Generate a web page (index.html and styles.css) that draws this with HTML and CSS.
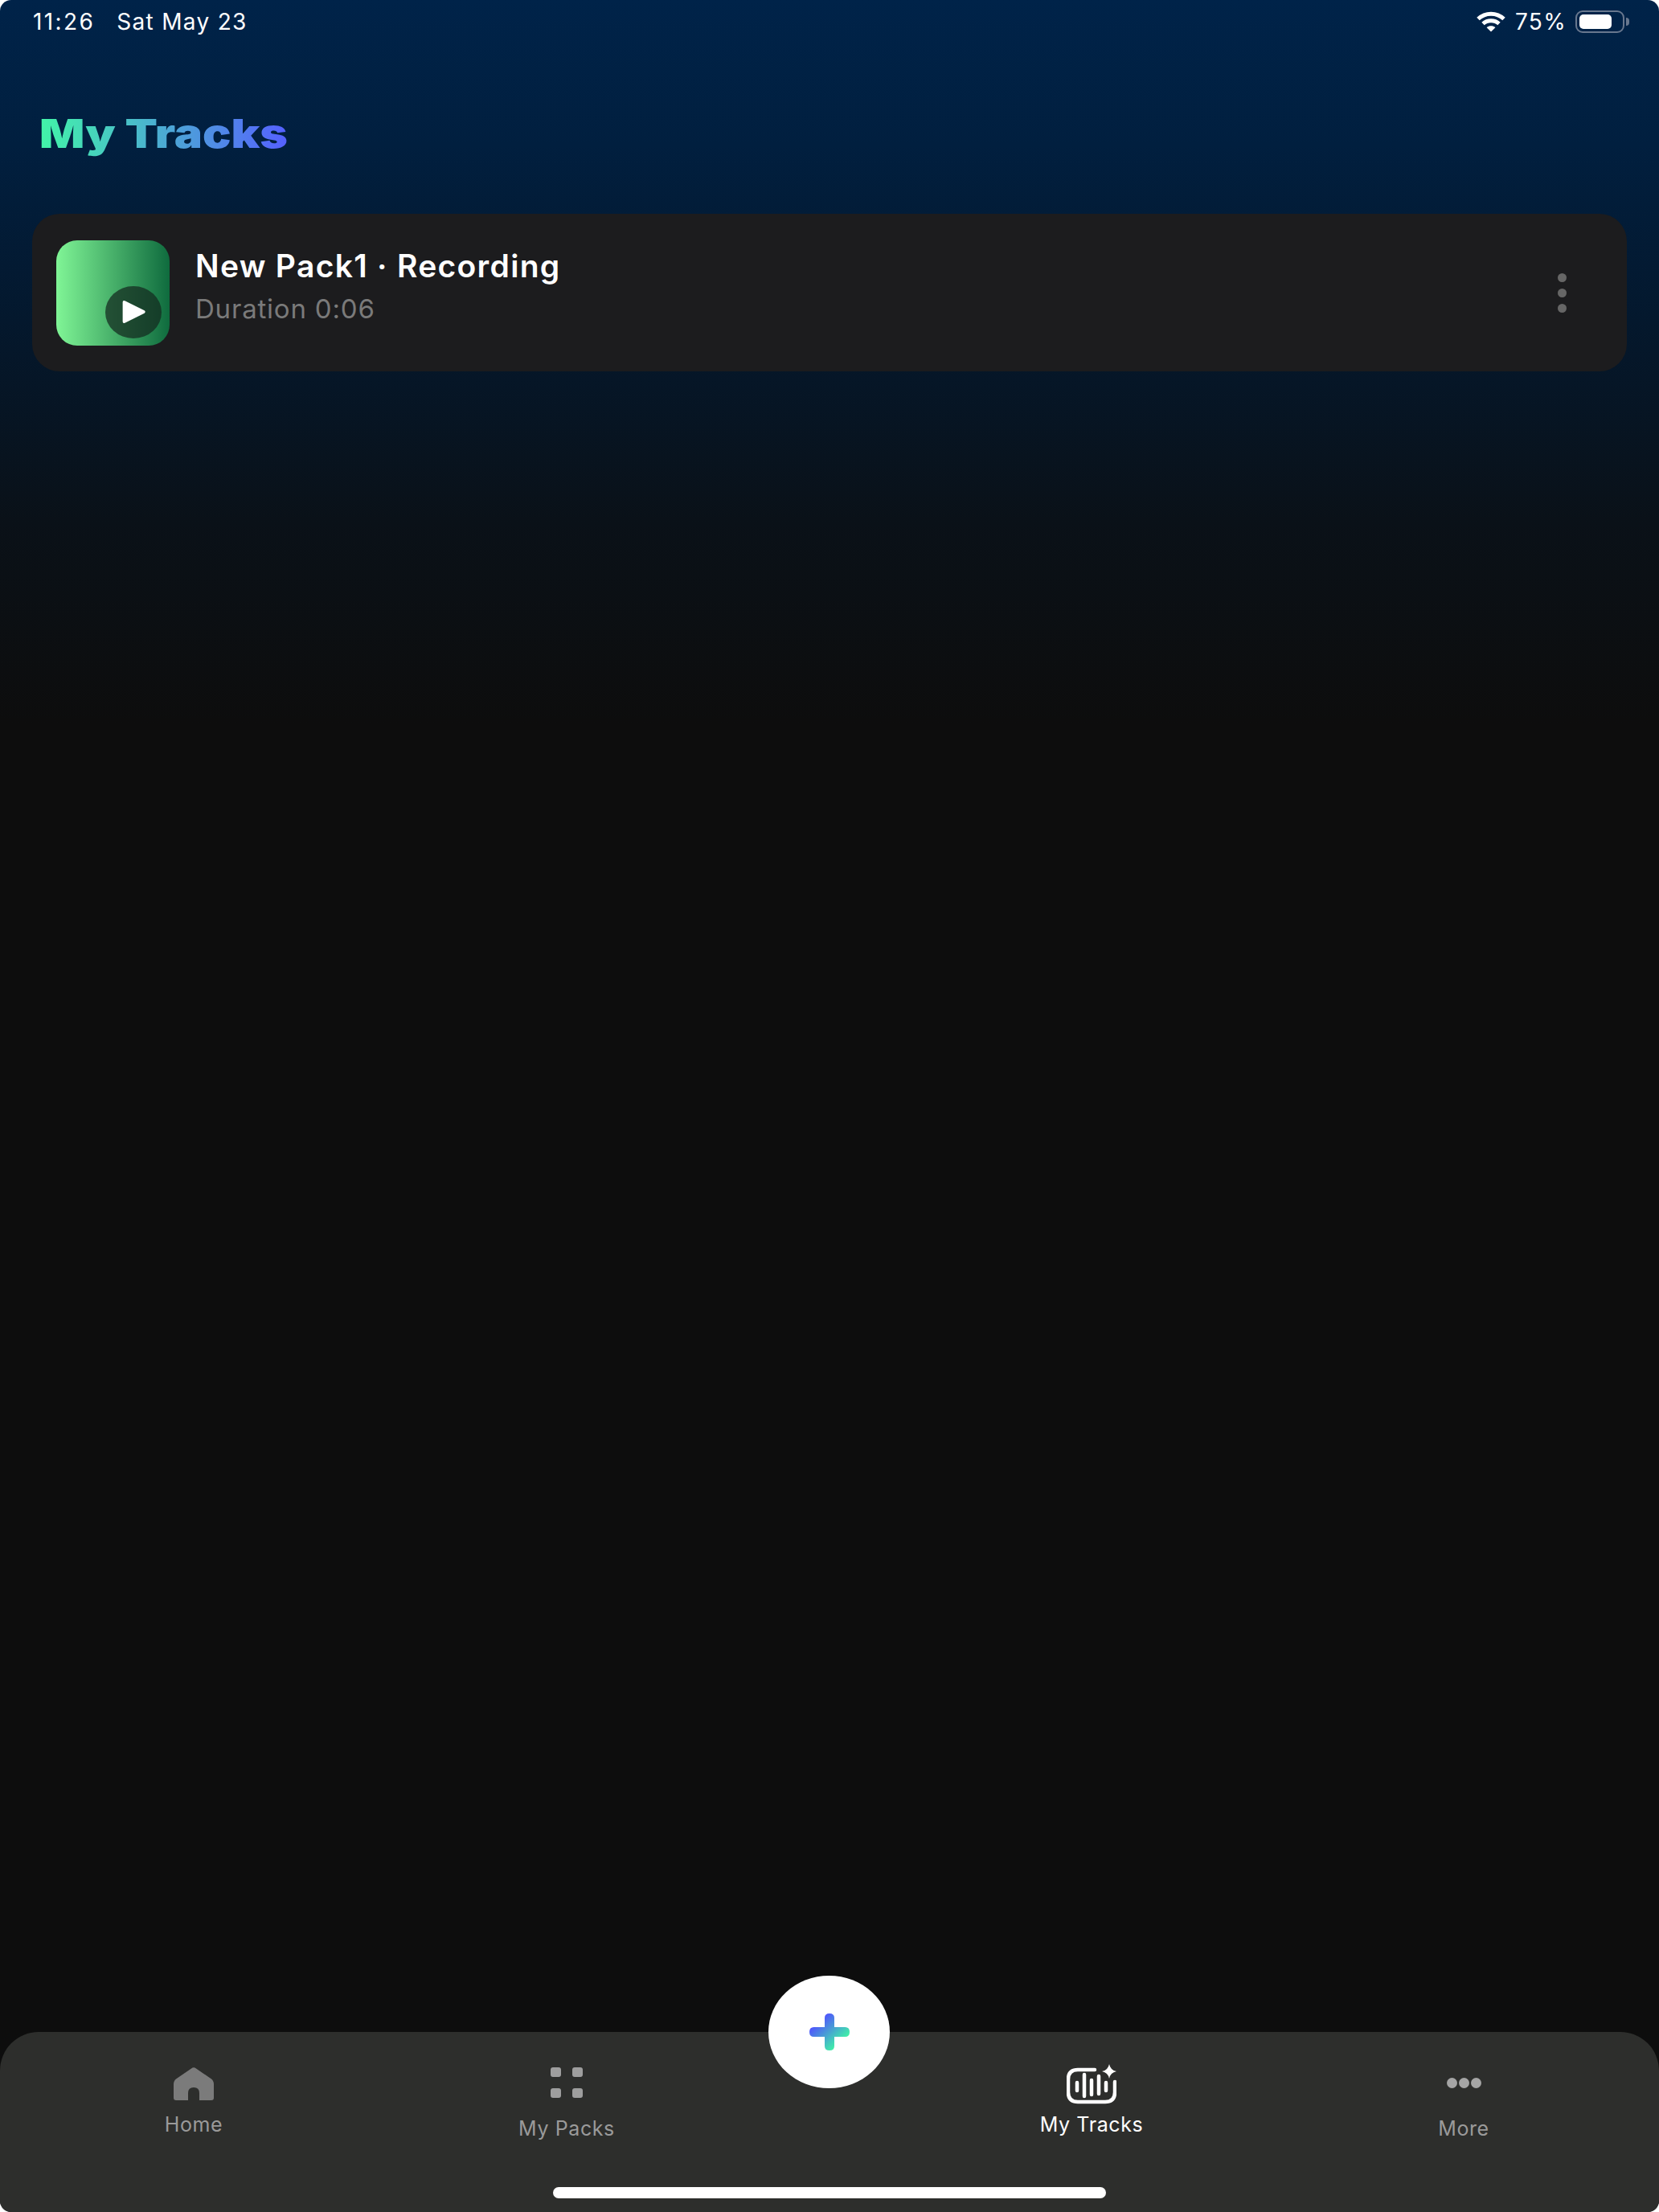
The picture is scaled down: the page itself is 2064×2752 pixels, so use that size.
FILE: index.html

```html
<!DOCTYPE html>
<html lang="en">
<head>
  <meta charset="UTF-8" />
  <meta name="viewport" content="width=device-width, initial-scale=1" />
  <title>My Tracks</title>
  <link rel="stylesheet" href="styles.css">
</head>
<body>
  <div class="screen">

    <div class="status-bar">
      <div class="status-left">
        <span class="status-time">11:26</span>
        <span>Sat May 23</span>
      </div>
      <div class="status-right">
        <svg class="wifi" viewBox="0 0 36 26">
          <path d="M2 9.5C11 1 25 1 34 9.5" />
          <path d="M8 15.5C13.5 10.5 22.5 10.5 28 15.5" />
          <path class="wifi-dot" d="M18 25.5L12.6 20.2C15.6 17.6 20.4 17.6 23.4 20.2Z" />
        </svg>
        <span>75%</span>
        <div class="battery">
          <div class="battery-fill"></div>
        </div>
        <div class="battery-nub"></div>
      </div>
    </div>

    <h1 class="page-title"><span>My Tracks</span></h1>

    <div class="track-card">
      <div class="thumb">
        <div class="thumb-play">
          <svg viewBox="0 0 30 32"><path d="M4 3.5L26 14.5Q28 16 26 17.5L4 28.5Q1.5 29.5 1.5 27V5Q1.5 2.5 4 3.5Z" /></svg>
        </div>
      </div>
      <div class="track-info">
        <div class="track-name">New Pack1 · Recording</div>
        <div class="track-duration">Duration 0:06</div>
      </div>
      <div class="track-menu">
        <i></i><i></i><i></i>
      </div>
    </div>

    <div class="spacer"></div>

    <nav class="tab-bar">
      <div class="tab">
        <div class="tab-icon">
          <svg class="icon-home" viewBox="0 0 50 41">
            <path d="M22 1.5Q25 -1 28 1.5L47 14.500Q50 17 50 21V38Q50 41 47 41H32V32Q32 25 25 25Q18 25 18 32V41H3Q0 41 0 38V21Q0 17 3 14.500Z" />
          </svg>
        </div>
        <div class="tab-label">Home</div>
      </div>
      <div class="tab tab-low">
        <div class="tab-icon">
          <div class="packs-grid"><i></i><i></i><i></i><i></i></div>
        </div>
        <div class="tab-label">My Packs</div>
      </div>
      <div class="tab-gap"></div>
      <div class="tab tab-active">
        <div class="tab-icon">
          <svg class="icon-tracks" viewBox="0 0 62 50">
            <path class="tracks-frame" d="M35 7H14Q2 7 2 19V35Q2 47 14 47H48Q60 47 60 35V22" />
            <path class="tracks-bars" d="M13 23V33M22 13V40M31 20V38M40 15V37M49 23V33" />
            <path class="tracks-star" d="M53 0Q54.5 7.500 62 9Q54.500 10.500 53 18Q51.500 10.500 44 9Q51.500 7.500 53 0Z" />
          </svg>
        </div>
        <div class="tab-label">My Tracks</div>
      </div>
      <div class="tab tab-low">
        <div class="tab-icon">
          <div class="more-dots"><i></i><i></i><i></i></div>
        </div>
        <div class="tab-label">More</div>
      </div>
    </nav>

    <div class="fab">
      <svg viewBox="0 0 50 46">
        <defs>
          <linearGradient id="plusGrad" x1="0" y1="0" x2="1" y2="1">
            <stop offset="0.2" stop-color="#5050ff" />
            <stop offset="0.8" stop-color="#40f5a5" />
          </linearGradient>
        </defs>
        <path fill="url(#plusGrad)" d="M19 5.500Q19 0 25 0Q31 0 31 5.500V17H44.500Q50 17 50 23Q50 29 44.500 29H31V40.500Q31 46 25 46Q19 46 19 40.500V29H5.500Q0 29 0 23Q0 17 5.500 17H19Z" />
      </svg>
    </div>

    <div class="home-bar"></div>
  </div>
</body>
</html>
```

FILE: styles.css

```css
html, body {
  margin: 0;
  padding: 0;
  height: 100%;
  background-color: #fff;
  overflow: hidden;
}
.screen {
  position: relative;
  display: flex;
  flex-direction: column;
  height: 2752px;
  border-radius: 14px;
  overflow: hidden;
  font-family: Inter, "Liberation Sans", sans-serif;
  background: linear-gradient(to bottom, #002349 0, #011f3f 180px, #04182d 400px, #0a1118 650px, #0d0d0d 900px);
}

/* status bar */
.status-bar {
  display: flex;
  justify-content: space-between;
  align-items: center;
  height: 54px;
  padding: 0 37px 0 41px;
  color: #fff;
  font-size: 28px;
  letter-spacing: 1.3px;
}
.status-left {
  display: flex;
  gap: 27px;
}
.status-time {
  letter-spacing: 2.4px;
}
.status-right {
  display: flex;
  align-items: center;
}
.wifi {
  width: 36px;
  height: 26px;
  margin-right: 12px;
  fill: none;
  stroke: #fff;
  stroke-width: 5;
}
.wifi-dot {
  fill: #fff;
  stroke: none;
}
.battery {
  box-sizing: border-box;
  width: 61px;
  height: 28px;
  margin-left: 11px;
  padding: 3px;
  border: 2px solid #68778e;
  border-radius: 9px;
}
.battery-fill {
  width: 40px;
  height: 100%;
  background-color: #fff;
  border-radius: 5px;
}
.battery-nub {
  width: 4px;
  height: 10px;
  margin-left: 2px;
  background-color: #68778e;
  border-radius: 0 4px 4px 0;
}

/* heading */
.page-title {
  margin: 0;
  padding: 82px 0 0 49px;
  font-size: 50px;
  font-weight: 900;
  line-height: 60px;
}
.page-title span {
  display: inline-block;
  background: linear-gradient(to right, #42f5a8, #5560ff);
  -webkit-background-clip: text;
  background-clip: text;
  color: transparent;
  transform: scaleX(1.18);
  transform-origin: left center;
}

/* track row */
.track-card {
  display: flex;
  align-items: center;
  height: 196px;
  margin: 70px 40px 0;
  padding: 0 30px;
  background-color: #1c1c1e;
  border-radius: 34px;
}
.thumb {
  position: relative;
  flex: none;
  width: 141px;
  height: 131px;
  background: linear-gradient(to right, #80f596, #0f6b3e);
  border-radius: 26px;
}
.thumb-play {
  position: absolute;
  left: 61px;
  top: 57px;
  display: flex;
  align-items: center;
  justify-content: center;
  width: 70px;
  height: 65px;
  background-color: rgba(20, 40, 30, 0.72);
  border-radius: 50%;
}
.thumb-play svg {
  width: 33px;
  height: 36px;
  margin-left: 3px;
  fill: #fff;
}
.track-info {
  flex: 1;
  margin: 0 0 16px 32px;
}
.track-name {
  color: #fff;
  font-size: 39px;
  font-weight: 600;
  letter-spacing: 1.3px;
  line-height: 46px;
}
.track-duration {
  margin-top: 10px;
  color: #7a7a7a;
  font-size: 33px;
  letter-spacing: 0.8px;
  line-height: 40px;
}
.track-menu {
  display: flex;
  flex-direction: column;
  gap: 8px;
  margin-right: 45px;
}
.track-menu i {
  display: block;
  width: 11px;
  height: 11px;
  background-color: #666;
  border-radius: 50%;
}

.spacer {
  flex: 1;
}

/* bottom tabs */
.tab-bar {
  display: grid;
  grid-template-columns: 464px 464px 189px 464px 462px;
  height: 224px;
  padding: 0 9px;
  background-color: #2d2e2c;
  border-radius: 48px 48px 0 0;
}
.tab {
  display: flex;
  flex-direction: column;
  align-items: center;
  padding-top: 40px;
  color: #9a9a9a;
}
.tab-icon {
  display: flex;
  justify-content: center;
  height: 60px;
}
.tab-low .tab-icon {
  height: 65px;
}
.tab-label {
  font-size: 25px;
  letter-spacing: 0.6px;
  line-height: 30px;
}
.tab-active {
  color: #fff;
}
.icon-home {
  width: 50px;
  height: 41px;
  margin-top: 4px;
  fill: #7b7b7b;
}
.packs-grid {
  display: grid;
  grid-template-columns: 13px 13px;
  grid-auto-rows: 12px;
  gap: 14px;
  margin-top: 4px;
}
.packs-grid i {
  background-color: #9e9e9e;
  border-radius: 3px;
}
.more-dots {
  display: flex;
  gap: 2px;
  margin-top: 17px;
}
.more-dots i {
  width: 13px;
  height: 13px;
  background-color: #a5a5a5;
  border-radius: 50%;
}
.icon-tracks {
  width: 62px;
  height: 50px;
}
.tracks-frame {
  fill: none;
  stroke: #fff;
  stroke-width: 4.5;
  stroke-linecap: round;
}
.tracks-bars {
  fill: none;
  stroke: #fff;
  stroke-width: 4.5;
  stroke-linecap: round;
}
.tracks-star {
  fill: #fff;
}

/* overlays */
.fab {
  position: absolute;
  left: 956px;
  top: 2458px;
  display: flex;
  align-items: center;
  justify-content: center;
  width: 151px;
  height: 140px;
  background-color: #fff;
  border-radius: 50%;
}
.fab svg {
  width: 50px;
  height: 46px;
}
.home-bar {
  position: absolute;
  left: 688px;
  top: 2721px;
  width: 688px;
  height: 14px;
  background-color: #fff;
  border-radius: 7px;
}
```
